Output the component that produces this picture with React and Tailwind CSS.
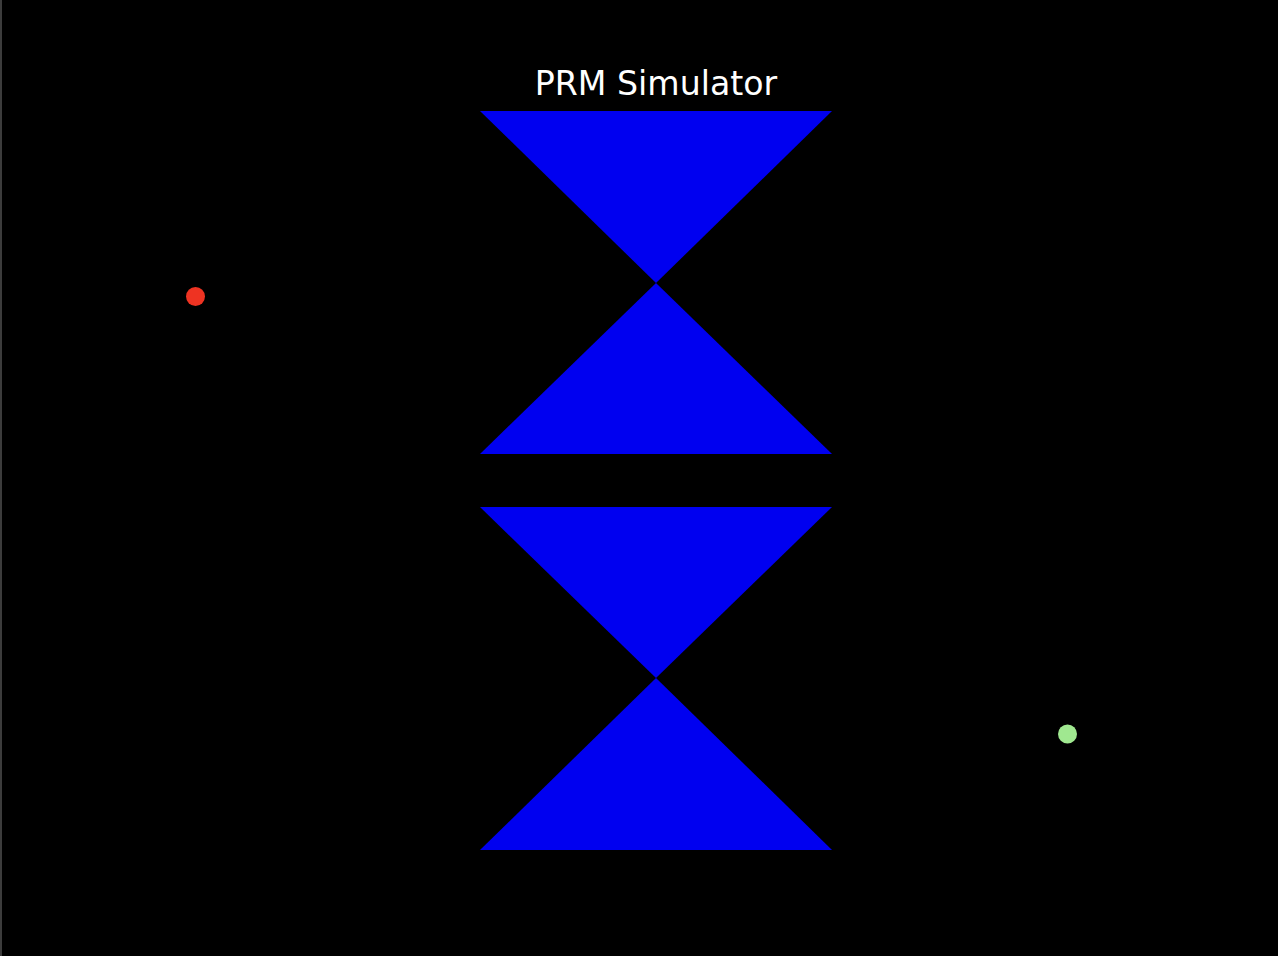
export default function App() {
  return (
    <div className="w-[1278px] h-[956px] bg-black border-l-2 border-[#3c3c3c] overflow-hidden">
      <svg width="1276" height="956" viewBox="2 0 1276 956" className="block">
        <text
          x="656"
          y="95"
          textAnchor="middle"
          fill="#ffffff"
          fontFamily="'DejaVu Sans', sans-serif"
          fontSize="33.2"
        >
          PRM Simulator
        </text>
        <polygon points="480,111 832,111 656,283" fill="#0000f0" />
        <polygon points="656,283 832,454 480,454" fill="#0000f0" />
        <polygon points="480,507 832,507 656,678" fill="#0000f0" />
        <polygon points="656,678 832,850 480,850" fill="#0000f0" />
        <circle cx="195.5" cy="296.5" r="9.5" fill="#ee3322" />
        <circle cx="1067.5" cy="734" r="9.5" fill="#a0e890" />
      </svg>
    </div>
  );
}
